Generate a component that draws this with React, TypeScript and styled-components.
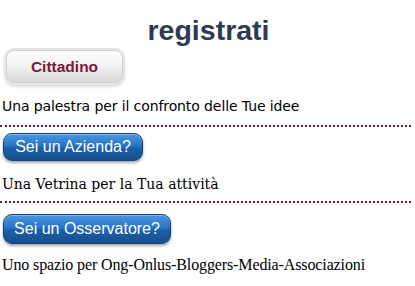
import React from "react";
import styled, { createGlobalStyle } from "styled-components";

const Global = createGlobalStyle`
  html, body { margin: 0; padding: 0; background: #fff; }
  body { font-family: "Liberation Serif", serif; }
`;

const Page = styled.div`
  width: 415px;
  padding: 0 0 0 2px;
  box-sizing: border-box;
`;

const Title = styled.h1`
  margin: 14px 0 0 0;
  height: 32px;
  line-height: 32px;
  text-align: center;
  font-family: "Liberation Sans", Arial, sans-serif;
  font-weight: bold;
  font-size: 28.5px;
  color: #2c3a56;
`;

const Section = styled.div<{ $top: number }>`
  padding-top: ${(p) => p.$top}px;
`;

const GrayButton = styled.button`
  display: block;
  margin: 2px 0 0 4px;
  width: 117px;
  height: 33px;
  border: 1px solid #cfcfcf;
  border-radius: 8px;
  background: linear-gradient(#ffffff 0%, #f4f4f4 45%, #d9d9d9 100%);
  box-shadow: 0 0 0 2px #e6e6e6, 0 2px 4px rgba(0, 0, 0, 0.3);
  font-family: "Liberation Sans", Arial, sans-serif;
  font-weight: bold;
  font-size: 15.5px;
  color: #7a1838;
  padding: 0;
`;

const BlueButton = styled.button<{ $w: number; $h: number }>`
  display: block;
  margin: 0 0 0 1px;
  width: ${(p) => p.$w}px;
  height: ${(p) => p.$h}px;
  border: 1px solid #16427a;
  border-radius: 9px;
  background: linear-gradient(#4a97e0 0%, #2a74c4 45%, #1c5fa8 55%, #174f8e 100%);
  box-shadow: 0 2px 3px rgba(0, 0, 0, 0.35), inset 0 1px 0 rgba(255, 255, 255, 0.35);
  font-family: "Liberation Sans", Arial, sans-serif;
  font-size: 16px;
  color: #fff;
  padding: 0;
`;

const Line = styled.p<{ $font: string; $size: number; $top: number; $ls?: number }>`
  margin: ${(p) => p.$top}px 0 0 0;
  font-family: ${(p) => p.$font};
  font-size: ${(p) => p.$size}px;
  letter-spacing: ${(p) => p.$ls ?? 0}px;
  line-height: 20px;
  color: #000;
  white-space: nowrap;
`;

const Divider = styled.div<{ $top: number }>`
  margin: ${(p) => p.$top}px 0 0 -2px;
  width: 411px;
  border-bottom: 2px dotted #6a1830;
`;

export default function App() {
  return (
    <Page>
      <Global />
      <Title>registrati</Title>
      <Section $top={2}>
        <GrayButton>Cittadino</GrayButton>
      </Section>
      <Line $font={'"DejaVu Sans", sans-serif'} $size={14} $top={13} $ls={-0.1}>
        Una palestra per il confronto delle Tue idee
      </Line>
      <Divider $top={9} />
      <Section $top={6}>
        <BlueButton $w={140} $h={28}>Sei un Azienda?</BlueButton>
      </Section>
      <Line $font={'"DejaVu Serif", Georgia, serif'} $size={14} $top={13}>
        Una Vetrina per la Tua attività
      </Line>
      <Divider $top={7} />
      <Section $top={11}>
        <BlueButton $w={168} $h={30}>Sei un Osservatore?</BlueButton>
      </Section>
      <Line $font={'"Liberation Serif", "Times New Roman", serif'} $size={16} $top={11} $ls={-0.12}>
        Uno spazio per Ong-Onlus-Bloggers-Media-Associazioni
      </Line>
    </Page>
  );
}
